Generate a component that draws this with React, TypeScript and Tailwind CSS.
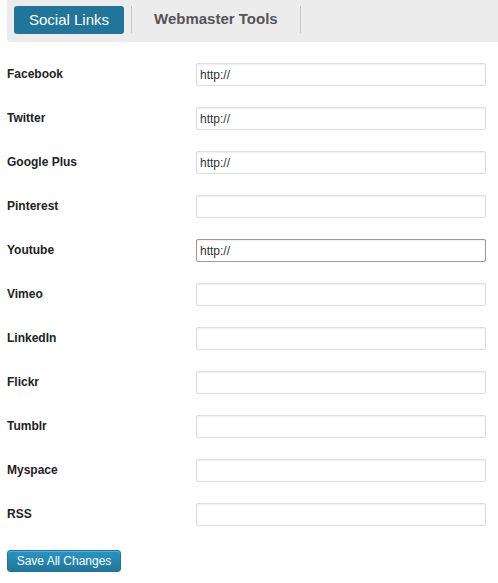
import React from "react";

const fields: { label: string; value: string; focused?: boolean }[] = [
  { label: "Facebook", value: "http://" },
  { label: "Twitter", value: "http://" },
  { label: "Google Plus", value: "http://" },
  { label: "Pinterest", value: "" },
  { label: "Youtube", value: "http://", focused: true },
  { label: "Vimeo", value: "" },
  { label: "LinkedIn", value: "" },
  { label: "Flickr", value: "" },
  { label: "Tumblr", value: "" },
  { label: "Myspace", value: "" },
  { label: "RSS", value: "" },
];

export default function App() {
  return (
    <div className="w-[498px] h-[583px] bg-white font-['Liberation_Sans',Arial,sans-serif] text-[#222]">
      {/* tab bar */}
      <div className="ml-[7px] h-[42px] bg-[#ececec] rounded-bl-[4px] flex items-start pt-[6px] pl-[7px]">
        <div className="h-[28px] w-[110px] rounded-[3px] bg-[#21759b] text-white text-[15px] flex items-center justify-center">
          Social Links
        </div>
        <div className="ml-[7px] w-px h-[27px] bg-[#c8c8c8]" />
        <div className="h-[27px] px-[22px] flex items-center text-[15px] font-bold text-[#555]">
          Webmaster Tools
        </div>
        <div className="w-px h-[27px] bg-[#c8c8c8]" />
      </div>

      {/* fields */}
      <div className="flex flex-col gap-[21px] pt-[21px] pl-[7px]">
        {fields.map((f) => (
          <div key={f.label} className="flex items-center h-[23px]">
            <label className="w-[189px] -mt-px text-[12px] font-bold text-[#222]">{f.label}</label>
            <input
              type="text"
              defaultValue={f.value}
              className={`w-[290px] h-[23px] rounded-[2px] bg-white px-[3px] text-[12px] text-[#333] outline-none shadow-[inset_0_1px_2px_rgba(0,0,0,0.07)] border ${
                f.focused ? "border-[#999]" : "border-[#dddddd]"
              }`}
            />
          </div>
        ))}
      </div>

      <div className="pl-[7px] pt-[22px]">
        <button className="h-[22px] w-[114px] rounded-[3px] border border-[#21759b] bg-gradient-to-b from-[#2a95c5] to-[#21759b] text-white text-[12px] shadow-[inset_0_1px_0_rgba(120,200,230,0.5)]">
          Save All Changes
        </button>
      </div>
    </div>
  );
}
